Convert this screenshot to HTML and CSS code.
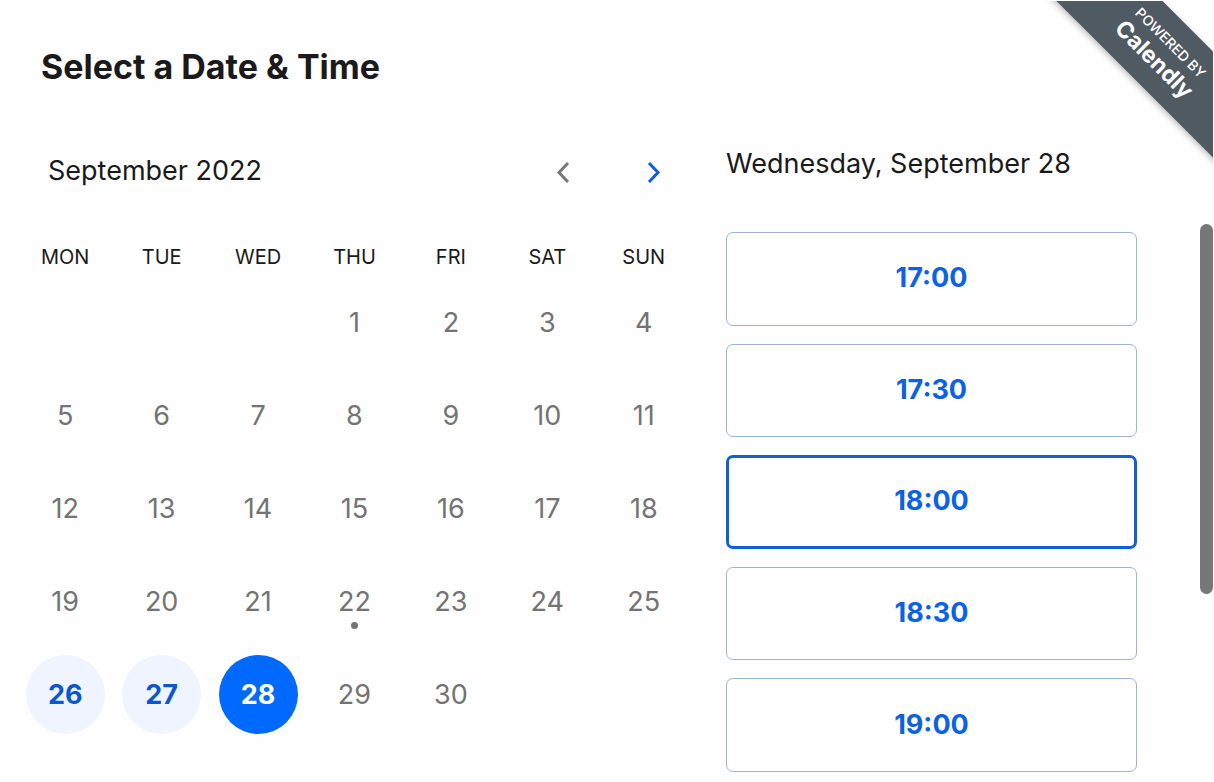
FILE: index.html
```html
<!DOCTYPE html>
<html lang="en">
<head>
<meta charset="utf-8">
<title>Select a Date &amp; Time</title>
<meta name="viewport" content="width=device-width, initial-scale=1">
<link rel="stylesheet" href="styles.css">
</head>
<body>
<a class="ribbon-corner" href="#calendly"><span class="ribbon"><span class="ribbon-small">POWERED BY</span><span class="ribbon-brand">Calendly</span></span></a>
<main class="page">
  <h1 class="title">Select a Date &amp; Time</h1>
  <div class="columns">
    <section class="calendar">
      <header class="month-bar">
        <h2 class="month">September 2022</h2>
        <button class="nav" type="button" aria-label="Previous month"><svg width="16" height="24" viewBox="0 0 16 24"><path d="M13 3L4 12.500l9 9.500"/></svg></button>
        <button class="nav nav-next" type="button" aria-label="Next month"><svg width="16" height="24" viewBox="0 0 16 24"><path d="M3 3l9 9.500-9 9.500"/></svg></button>
      </header>
      <table class="days">
        <thead>
          <tr><th>MON</th><th>TUE</th><th>WED</th><th>THU</th><th>FRI</th><th>SAT</th><th>SUN</th></tr>
        </thead>
        <tbody>
          <tr><td></td><td></td><td></td><td><button class="day">1</button></td><td><button class="day">2</button></td><td><button class="day">3</button></td><td><button class="day">4</button></td></tr>
          <tr><td><button class="day">5</button></td><td><button class="day">6</button></td><td><button class="day">7</button></td><td><button class="day">8</button></td><td><button class="day">9</button></td><td><button class="day">10</button></td><td><button class="day">11</button></td></tr>
          <tr><td><button class="day">12</button></td><td><button class="day">13</button></td><td><button class="day">14</button></td><td><button class="day">15</button></td><td><button class="day">16</button></td><td><button class="day">17</button></td><td><button class="day">18</button></td></tr>
          <tr><td><button class="day">19</button></td><td><button class="day">20</button></td><td><button class="day">21</button></td><td><button class="day today">22</button></td><td><button class="day">23</button></td><td><button class="day">24</button></td><td><button class="day">25</button></td></tr>
          <tr><td><button class="day open">26</button></td><td><button class="day open">27</button></td><td><button class="day selected">28</button></td><td><button class="day">29</button></td><td><button class="day">30</button></td><td></td><td></td></tr>
        </tbody>
      </table>
    </section>
    <section class="times">
      <h2 class="date">Wednesday, September 28</h2>
      <div class="scroller">
        <div class="slots">
          <button class="slot" type="button">17:00</button>
          <button class="slot" type="button">17:30</button>
          <button class="slot active" type="button">18:00</button>
          <button class="slot" type="button">18:30</button>
          <button class="slot" type="button">19:00</button>
        </div>
        <div class="thumb"></div>
      </div>
    </section>
  </div>
</main>
</body>
</html>
```
FILE: styles.css
```css
* { box-sizing: border-box; }
body {
  margin: 0;
  background: #fefefe;
  color: #1a1a1a;
  font-family: Inter, "Open Sans", sans-serif;
}
button { font: inherit; cursor: pointer; }
h1, h2 { margin: 0; }
.page { padding: 46px 0 0 17px; }
.title { padding-left: 24px; font-size: 34px; line-height: 42px; font-weight: 700; }
.columns {
  display: grid;
  grid-template-columns: 675fr 522fr;
  padding-top: 56px;
}
.month-bar { display: flex; align-items: center; padding: 7px 22px 0 31px; }
.month, .date { font-size: 27px; line-height: 40px; font-weight: 400; }
.month { flex: 1; }
.nav {
  display: flex;
  align-items: center;
  justify-content: center;
  width: 32px;
  height: 40px;
  margin-left: 59px;
  padding: 2px 0 0;
  border: 0;
  background: none;
}
.nav svg { fill: none; stroke: #777; stroke-width: 3; }
.nav-next svg { stroke: #0b5fe0; }
.days { width: 100%; table-layout: fixed; border-collapse: collapse; margin-top: 46px; }
.days th { height: 39px; padding: 0; font-size: 20px; line-height: 24px; font-weight: 400; }
.days tbody { font-size: 27px; }
.days td { height: 93px; padding: 0; text-align: center; }
.day {
  position: relative;
  width: 79px;
  height: 79px;
  padding: 0;
  border: 0;
  border-radius: 50%;
  background: none;
  color: #737373;
  font-weight: 400;
  vertical-align: middle;
}
.open { background: #f0f4ff; color: #0b57d0; font-weight: 700; }
.selected { background: #0069ff; color: #fff; font-weight: 700; }
.today::after {
  content: "";
  position: absolute;
  left: calc(50% - 3px);
  bottom: 12px;
  width: 7px;
  height: 7px;
  border-radius: 50%;
  background: #737373;
}
.times { padding-left: 34px; }
.scroller { display: flex; justify-content: space-between; padding-top: 48px; }
.slots {
  display: grid;
  flex: 1;
  grid-auto-rows: 1fr;
  gap: 18px;
  min-height: 540px;
  margin-right: 63px;
}
.slot {
  padding: 0 0 2px;
  border: 1px solid #9bb5d6;
  border-radius: 7px;
  background: #fff;
  color: #0b62e4;
  font-size: 27px;
  font-weight: 700;
}
.slot.active { border: 3px solid #1160d8; }
.thumb { width: 13px; height: 370px; margin-top: -8px; margin-right: 1px; border-radius: 7px; background: #777; }
.ribbon-corner {
  position: absolute;
  top: 1px;
  right: 1px;
  width: 180px;
  height: 180px;
  overflow: hidden;
  color: #fff;
  text-decoration: none;
}
.ribbon {
  position: absolute;
  top: 14px;
  right: -78px;
  display: flex;
  flex-direction: column;
  align-items: center;
  justify-content: center;
  width: 260px;
  height: 75px;
  background: #505a62;
  box-shadow: 0 2px 6px #0004;
  transform: rotate(45deg);
}
.ribbon-small { font-size: 14px; line-height: 20px; font-weight: 500; }
.ribbon-brand { font-size: 23px; line-height: 27px; font-weight: 700; }
```
